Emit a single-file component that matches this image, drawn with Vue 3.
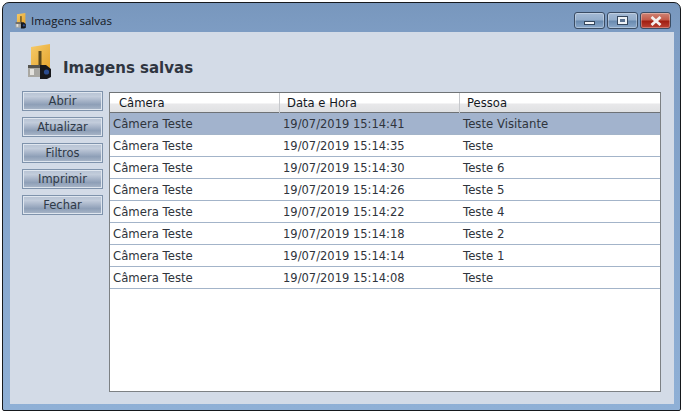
<template>
  <div class="window">
    <div class="titlebar">
      <svg class="title-icon" viewBox="0 0 24 36">
        <use href="#camera-folder" />
      </svg>
      <span class="title-text">Imagens salvas</span>
      <div class="controls">
        <button class="ctl"><span class="glyph-min"></span></button>
        <button class="ctl"><span class="glyph-max"></span></button>
        <button class="ctl ctl-close">
          <svg width="14" height="10" viewBox="0 0 14 10">
            <path d="M2.5 1 L11.5 9 M11.5 1 L2.5 9" stroke="#f4f0ee" stroke-width="2.8" fill="none" />
          </svg>
        </button>
      </div>
    </div>

    <div class="panel">
      <div class="heading">
        <svg class="heading-icon" viewBox="0 0 24 36">
          <defs>
            <linearGradient id="folder" x1="0" y1="0" x2="1" y2="1">
              <stop offset="0" stop-color="#f6cb6a" />
              <stop offset="1" stop-color="#e5a42c" />
            </linearGradient>
            <g id="camera-folder">
              <path d="M4 3 L23 0 V25 H4 Z" fill="url(#folder)" />
              <rect x="11.5" y="7" width="3" height="14" fill="#5c4a1e" />
              <path d="M1 21 H15 V33 H1 Z" fill="#a9a8a3" />
              <rect x="1" y="21" width="14" height="3" fill="#55544f" />
              <rect x="3" y="25" width="4" height="6" fill="#e4e3df" />
              <path d="M13 21 H19 L24 25 V33 L20 35 H13 Z" fill="#17181c" />
              <circle cx="19.5" cy="28" r="2.6" fill="#2b4c8f" />
            </g>
          </defs>
          <use href="#camera-folder" />
        </svg>
        <h1 class="heading-text">Imagens salvas</h1>
      </div>

      <div class="content">
        <div class="actions">
          <button v-for="action in actions" :key="action" class="action">{{ action }}</button>
        </div>

        <div class="table">
          <div class="thead">
            <div class="th">Câmera</div>
            <div class="th">Data e Hora</div>
            <div class="th">Pessoa</div>
          </div>
          <div
            v-for="(row, index) in rows"
            :key="index"
            class="row"
            :class="{ selected: index === 0 }"
          >
            <div class="td">{{ row.camera }}</div>
            <div class="td td-date">{{ row.date }}</div>
            <div class="td">{{ row.person }}</div>
          </div>
        </div>
      </div>
    </div>
  </div>
</template>

<script setup>
const actions = ['Abrir', 'Atualizar', 'Filtros', 'Imprimir', 'Fechar']

const rows = [
  { camera: 'Câmera Teste', date: '19/07/2019 15:14:41', person: 'Teste Visitante' },
  { camera: 'Câmera Teste', date: '19/07/2019 15:14:35', person: 'Teste' },
  { camera: 'Câmera Teste', date: '19/07/2019 15:14:30', person: 'Teste 6' },
  { camera: 'Câmera Teste', date: '19/07/2019 15:14:26', person: 'Teste 5' },
  { camera: 'Câmera Teste', date: '19/07/2019 15:14:22', person: 'Teste 4' },
  { camera: 'Câmera Teste', date: '19/07/2019 15:14:18', person: 'Teste 2' },
  { camera: 'Câmera Teste', date: '19/07/2019 15:14:14', person: 'Teste 1' },
  { camera: 'Câmera Teste', date: '19/07/2019 15:14:08', person: 'Teste' }
]
</script>

<style>
html,
body {
  margin: 0;
  background: #fff;
  overflow: hidden;
}
</style>

<style scoped>
.window {
  box-sizing: border-box;
  width: 679px;
  height: 409px;
  margin: 2px 0 0 2px;
  padding: 0 6px 6px 7px;
  border: 1px solid #16191d;
  border-radius: 7px 7px 2px 2px;
  background: linear-gradient(180deg, #7897bd 0, #7e9dc4 8%, #8fb0d6 100%);
  display: flex;
  flex-direction: column;
  font-family: "DejaVu Sans", sans-serif;
}

.titlebar {
  box-sizing: border-box;
  height: 29px;
  padding-top: 6px;
  flex: none;
  display: flex;
  align-items: center;
  color: #14181e;
}

.title-icon {
  width: 11px;
  height: 16px;
  margin: 0 0 0 5px;
}

.title-text {
  margin-left: 5px;
  font-family: "Open Sans", sans-serif;
  font-size: 11.5px;
}

.controls {
  margin: 0 3px 0 auto;
  display: flex;
  gap: 2px;
}

.ctl {
  width: 31px;
  height: 17px;
  padding: 0;
  border: 1px solid #3a4c63;
  border-radius: 3px;
  background: linear-gradient(#a4bad5 0, #93adcb 45%, #6a8bb0 55%, #8aa8ca 100%);
  box-shadow: inset 0 0 0 1px rgba(255, 255, 255, 0.3);
  display: flex;
  align-items: center;
  justify-content: center;
}

.ctl-close {
  background: linear-gradient(#cf8475 0, #c25a49 45%, #a11f12 55%, #bb4334 100%);
}

.glyph-min {
  width: 9px;
  height: 2px;
  margin-top: 4px;
  background: #f2f5f8;
  border: 1px solid #34465c;
}

.glyph-max {
  box-sizing: border-box;
  width: 9px;
  height: 7px;
  background: #5a7291;
  border: 2px solid #eef2f6;
  outline: 1px solid #34465c;
}

.panel {
  flex: 1;
  background: #d3dbe7;
  display: flex;
  flex-direction: column;
  padding: 0 13px 12px 12px;
}

.heading {
  height: 59px;
  flex: none;
  display: flex;
  align-items: flex-start;
  padding: 12px 0 0 5px;
  box-sizing: border-box;
}

.heading-icon {
  width: 24px;
  height: 36px;
}

.heading-text {
  margin: 15px 0 0 12px;
  font-size: 15px;
  line-height: 18px;
  font-weight: 700;
  color: #2f3540;
}

.content {
  flex: 1;
  display: flex;
  min-height: 0;
}

.actions {
  width: 87px;
  flex: none;
  display: flex;
  flex-direction: column;
  gap: 6px;
}

.action {
  box-sizing: border-box;
  width: 81px;
  height: 20px;
  padding: 0;
  border: 1px solid #7f93ac;
  background: linear-gradient(#b6c2d3 0, #c2ccdb 25%, #8e9fb7 70%, #aab7c9 100%);
  box-shadow: inset 0 0 0 1px #dfe6ef;
  font-family: inherit;
  font-size: 11.5px;
  color: #2f3a48;
}

.table {
  flex: 1;
  background: #fff;
  border: 1px solid #7d8184;
  border-top-color: #6f7376;
  box-sizing: border-box;
  margin-top: 1px;
}

.thead,
.row {
  display: grid;
  grid-template-columns: 170px 180px 1fr;
}

.thead {
  height: 19px;
  border-bottom: 1px solid #6e7276;
  background: linear-gradient(#fff 0, #fff 50%, #e8e8ea 60%, #e0e1e3 100%);
}

.th {
  padding-left: 9px;
  font-size: 11.6px;
  line-height: 20px;
  color: #14181e;
  border-right: 1px solid #c6c8cc;
}

.th + .th {
  padding-left: 7px;
}

.th:last-child {
  border-right: none;
}

.row {
  height: 22px;
  box-sizing: border-box;
  border-bottom: 1px solid #a3b4c9;
  background: #fff;
}

.row.selected {
  background: #a2b3cd;
}

.td {
  padding-left: 3px;
  font-size: 11.7px;
  line-height: 22px;
  color: #2f343c;
}

.td-date {
  font-size: 11.5px;
}
</style>
